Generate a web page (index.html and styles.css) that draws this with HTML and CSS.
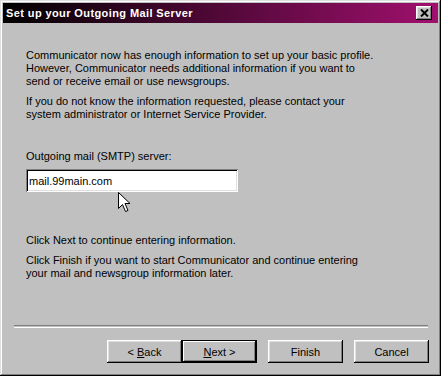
FILE: index.html
```html
<!DOCTYPE html>
<html lang="en">
<head>
    <meta charset="UTF-8">
    <title>Set up your Outgoing Mail Server</title>
    <link rel="stylesheet" href="styles.css">
</head>
<body>
    <div class="window">
        <div class="titlebar">
            <span class="title">Set up your Outgoing Mail Server</span>
            <button class="close-btn" aria-label="Close">
                <svg width="9" height="8" viewBox="0 0 9 8">
                    <path d="M1 0.5 L8 7.5 M8 0.5 L1 7.5" stroke="#000" stroke-width="2" fill="none"/>
                </svg>
            </button>
        </div>

        <div class="content">
            <p>Communicator now has enough information to set up your basic profile.<br>
            However, Communicator needs additional information if you want to<br>
            send or receive email or use newsgroups.</p>
            <p class="second">If you do not know the information requested, please contact your<br>
            system administrator or Internet Service Provider.</p>

            <label class="field-label" for="smtp">Outgoing mail (SMTP) server:</label>
            <div class="field">
                <input id="smtp" class="text-input" type="text" value="mail.99main.com">
                <!-- mouse pointer sitting under the field -->
                <svg class="pointer" width="13" height="20" viewBox="0 0 13 20">
                    <path d="M0.5 0.5 L0.5 16.5 L4.5 12.5 L7.5 19.5 L10 18.5 L7 11.5 L12 11.5 Z" fill="#fff" stroke="#000" stroke-width="1"/>
                </svg>
            </div>

            <p class="hint">Click Next to continue entering information.</p>
            <p class="second">Click Finish if you want to start Communicator and continue entering<br>
            your mail and newsgroup information later.</p>
        </div>

        <div class="separator"></div>

        <div class="buttons">
            <button class="btn">&lt; <u>B</u>ack</button>
            <button class="btn default"><u>N</u>ext &gt;</button>
            <button class="btn spaced">Finish</button>
            <button class="btn spaced">Cancel</button>
        </div>
    </div>
</body>
</html>
```

FILE: styles.css
```css
body {
    margin: 0;
    background: #c0c0c0;
    font-family: "Liberation Sans", Arial, sans-serif;
    font-size: 11px;
    color: #000;
}

.window {
    width: 441px;
    height: 376px;
    box-sizing: border-box;
    padding: 3px;
    background: #c0c0c0;
    box-shadow: inset -1px -1px #000, inset 1px 1px #dfdfdf,
                inset -2px -2px #808080, inset 2px 2px #fff;
    display: flex;
    flex-direction: column;
}

.titlebar {
    height: 20px;
    display: flex;
    align-items: center;
    justify-content: space-between;
    padding: 0 3px 0 3px;
    background: linear-gradient(to right, #000 0%, #3a0628 35%, #a0106e 100%);
}

.title {
    color: #fff;
    font-weight: bold;
    font-size: 11px;
    letter-spacing: 0.4px;
}

.close-btn {
    width: 16px;
    height: 14px;
    padding: 0;
    border: none;
    background: #c0c0c0;
    box-shadow: inset -1px -1px #000, inset 1px 1px #fff,
                inset -2px -2px #808080, inset 2px 2px #dfdfdf;
    display: flex;
    align-items: center;
    justify-content: center;
    margin-right: 3px;
}

.content {
    padding: 26px 0 0 23px;
    line-height: 13px;
    white-space: nowrap;
}

.content p {
    margin: 0;
}

.content p.second {
    margin-top: 7px;
}

.field-label {
    display: block;
    margin-top: 29px;
}

.field {
    position: relative;
    margin-top: 6px;
}

.text-input {
    display: block;
    width: 212px;
    height: 23px;
    box-sizing: border-box;
    margin: 0;
    padding: 0 3px;
    border: none;
    background: #fff;
    font-family: inherit;
    font-size: 11px;
    color: #000;
    box-shadow: inset 1px 1px #808080, inset -1px -1px #fff,
                inset 2px 2px #000, inset -2px -2px #dfdfdf;
    outline: none;
}

.pointer {
    position: absolute;
    left: 92px;
    top: 23px;
}

.hint {
    margin-top: 42px !important;
}

.separator {
    margin: auto 10px 0 11px;
    height: 1px;
    border-top: 1px solid #808080;
    border-bottom: 1px solid #fff;
}

.buttons {
    display: flex;
    justify-content: flex-end;
    padding: 12px 9px 10px 0;
}

.btn {
    width: 75px;
    height: 23px;
    padding: 0;
    border: none;
    background: #c0c0c0;
    font-family: inherit;
    font-size: 11px;
    color: #000;
    box-shadow: inset -1px -1px #000, inset 1px 1px #fff,
                inset -2px -2px #808080, inset 2px 2px #dfdfdf;
}

.btn.default {
    box-shadow: inset 0 0 0 1px #000, inset -2px -2px #000, inset 2px 2px #fff,
                inset -3px -3px #808080;
}

.btn.spaced {
    margin-left: 11px;
}
```
